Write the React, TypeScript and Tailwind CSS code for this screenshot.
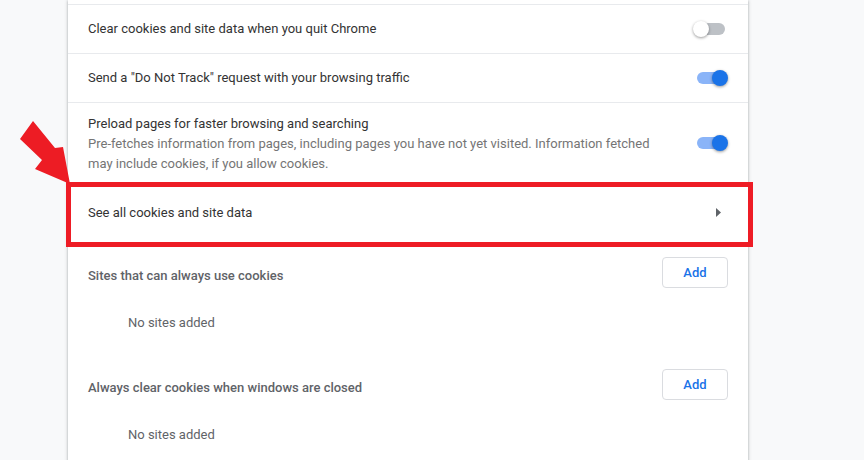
import React from 'react'

function Toggle({ on }: { on: boolean }) {
  return (
    <div className="relative h-[16px] w-[35px] shrink-0">
      {on ? (
        <>
          <div className="absolute left-[4px] top-[2px] h-[12px] w-[24px] rounded-full bg-[#8ab4f8]" />
          <div className="absolute left-[19px] top-0 h-[16px] w-[16px] rounded-full bg-[#1a73e8] shadow-[0_1px_3px_rgba(0,0,0,0.4)]" />
        </>
      ) : (
        <>
          <div className="absolute left-[8px] top-[2px] h-[12px] w-[24px] rounded-full bg-[#bdc1c6]" />
          <div className="absolute left-0 top-0 h-[16px] w-[16px] rounded-full bg-white shadow-[0_1px_3px_rgba(0,0,0,0.4)]" />
        </>
      )}
    </div>
  )
}

function ToggleRow({ label, on }: { label: string; on: boolean }) {
  return (
    <div className="flex h-[49px] items-center justify-between border-t border-[#e8eaed] pl-[20px] pr-[20px]">
      <span className="text-[#333333]">{label}</span>
      <Toggle on={on} />
    </div>
  )
}

function SiteSection({ title, top }: { title: string; top: string }) {
  return (
    <div className={top}>
      <div className="flex h-[31px] items-center justify-between pl-[20px] pr-[20px]">
        <span className="pt-[6px] font-medium text-[#5f6368]">{title}</span>
        <button className="h-[31px] w-[66px] rounded-[4px] border border-[#dadce0] bg-white font-medium text-[#1a73e8]">
          Add
        </button>
      </div>
      <div className="mt-[11px] flex h-[48px] items-center pl-[60px] text-[#5f6368]">
        No sites added
      </div>
    </div>
  )
}

export default function App() {
  return (
    <div
      className="relative h-[460px] w-[864px] overflow-hidden bg-[#f8f9fa] text-[13px] leading-[20px]"
      style={{ fontFamily: 'Roboto, "Liberation Sans", sans-serif' }}
    >
      <div className="ml-[68px] w-[680px] bg-white pb-[40px] shadow-[0_1px_2px_0_rgba(60,64,67,0.3),0_1px_3px_1px_rgba(60,64,67,0.15)]">
        <div className="h-[4px]" />
        <ToggleRow label="Clear cookies and site data when you quit Chrome" on={false} />
        <ToggleRow label={'Send a "Do Not Track" request with your browsing traffic'} on={true} />

        <div className="flex h-[81px] items-center justify-between border-t border-[#e8eaed] pl-[20px] pr-[20px]">
          <div className="w-[575px] pt-[2px]">
            <div className="text-[#333333]">Preload pages for faster browsing and searching</div>
            <div className="text-[#757575]">
              Pre-fetches information from pages, including pages you have not yet visited. Information fetched
              may include cookies, if you allow cookies.
            </div>
          </div>
          <Toggle on={true} />
        </div>

        <div className="flex h-[58px] items-center justify-between border-t border-[#e8eaed] pl-[20px] pr-[27px]">
          <span className="text-[#333333]">See all cookies and site data</span>
          <svg width="5" height="9" viewBox="0 0 5 9">
            <path d="M0 0 L5 4.5 L0 9 Z" fill="#5f6368" />
          </svg>
        </div>

        <SiteSection title="Sites that can always use cookies" top="pt-[16px]" />
        <SiteSection title="Always clear cookies when windows are closed" top="pt-[22px]" />
      </div>

      {/* annotation: red box */}
      <div className="absolute left-[66px] top-[182px] h-[65px] w-[687px] border-[5px] border-[#ee1c25]" />

      {/* annotation: red arrow */}
      <svg className="absolute left-0 top-0" width="90" height="200" viewBox="0 0 90 200">
        <polygon
          points="33,121 55,148 63,147 70,184 35,169 42,160 20,139"
          fill="#ed1c24"
        />
      </svg>
    </div>
  )
}
